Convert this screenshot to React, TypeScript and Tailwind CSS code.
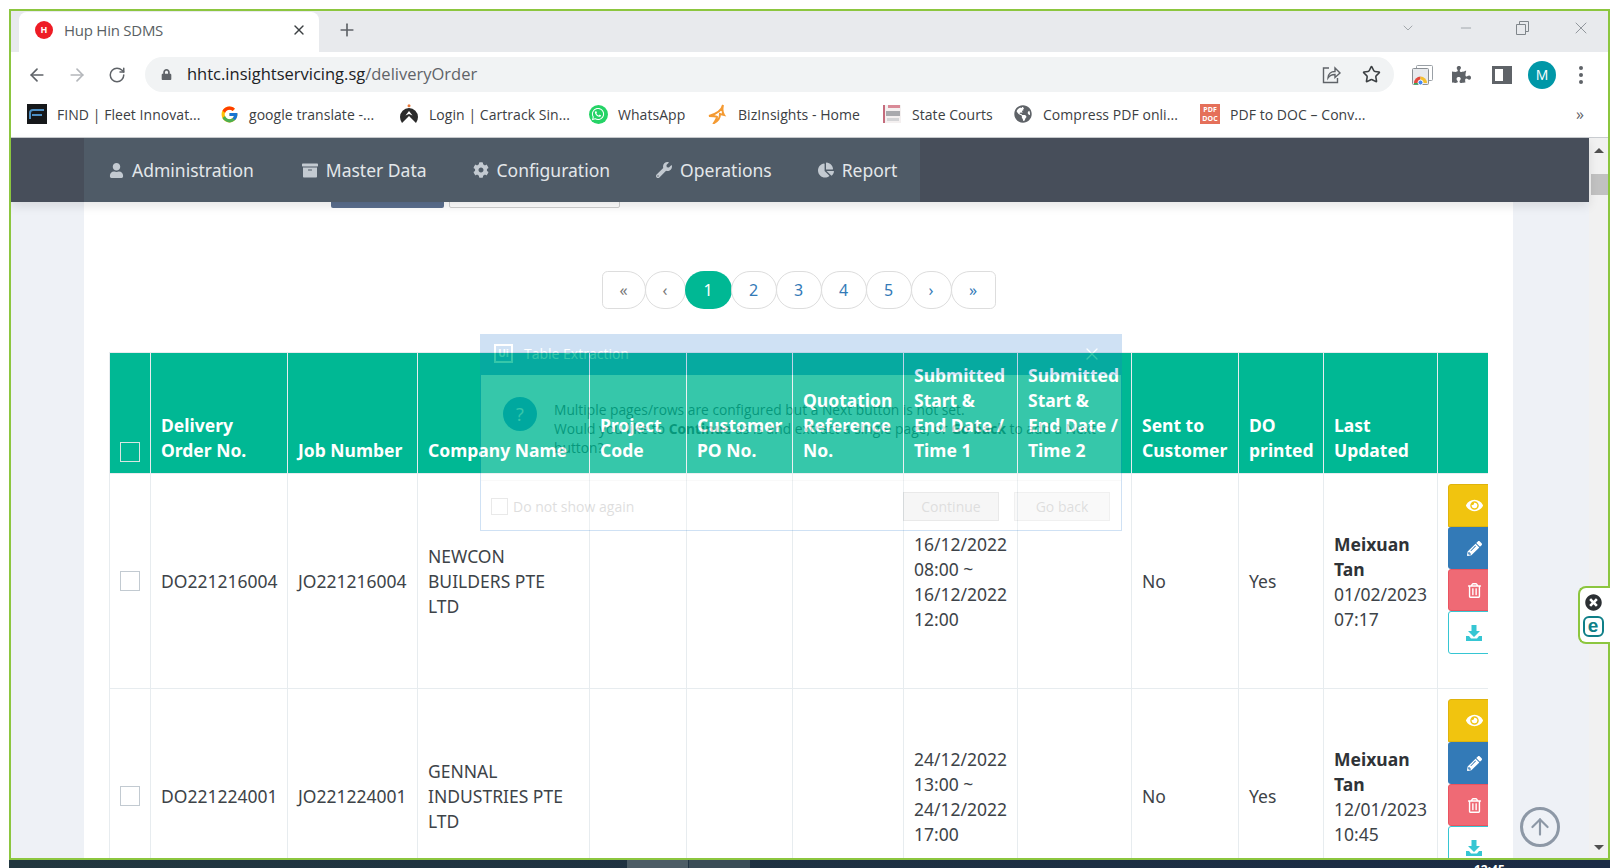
import { ArrowLeft, ArrowRight, RotateCw, X, Plus, ChevronDown, Minus, Star, ArrowUp } from "lucide-react";
import { FaUser, FaArchive, FaCog, FaWrench, FaChartPie, FaEye, FaPencilAlt, FaRegTrashAlt, FaLock, FaWhatsapp, FaGlobeAmericas, FaPuzzlePiece, FaTimesCircle } from "react-icons/fa";
import { FcGoogle } from "react-icons/fc";
import type { ReactNode } from "react";

const PAGE_FONT = "font-['Noto_Sans','Open_Sans',sans-serif]";

function FindIcon() {
  return (
    <svg width="20" height="20" viewBox="0 0 20 20">
      <rect width="20" height="20" fill="#16181a" />
      <path d="M3 15V9q0-3 3-3h11M5 11h10" fill="none" stroke="#4d8fc4" strokeWidth="2" />
    </svg>
  );
}

function CartrackIcon() {
  return (
    <svg width="20" height="20" viewBox="0 0 20 20">
      <circle cx="10" cy="1.800" r="1.500" fill="#e8793a" />
      <path d="M1 13a9 9 0 0 1 18 0q0 3-2 6l-7-7-7 7q-2-3-2-6z" fill="#2a2a2a" />
      <path d="M10 7l3.500 4.500-3.500-1.500-3.500 1.500z" fill="#fff" />
    </svg>
  );
}

function BizIcon() {
  return (
    <svg width="20" height="20" viewBox="0 0 20 20" fill="none" stroke="#f49a32" strokeWidth="2">
      <path d="M15 1C14 6 8 10 1 12c3 0 6 0 8 1 0 2-2 4-3 6 4-2 6-6 6-9l4 1c-2-3-2-6-1-10z" />
    </svg>
  );
}

function CourtsIcon() {
  return (
    <svg width="20" height="20" viewBox="0 0 20 20">
      <rect x="1" y="1" width="18" height="18" fill="#f4f0f0" />
      <rect x="1" y="1" width="2" height="18" fill="#c56b7c" />
      <rect x="6" y="1" width="12" height="3" fill="#d98a97" />
      <rect x="4" y="7" width="14" height="5" fill="#a9a9ad" />
      <rect x="5" y="14" width="12" height="3" fill="#d4d4d6" />
    </svg>
  );
}

function CastIcon() {
  return (
    <svg width="24" height="24" viewBox="0 0 24 24">
      <rect x="6.500" y="2.500" width="16" height="15" rx="1" fill="#fff" stroke="#9aa0a6" />
      <rect x="2.500" y="5.500" width="16" height="16" rx="1" fill="#e8eaed" stroke="#8a8f94" />
      <path d="M4 20a6.500 6.500 0 0 1 6.500-6.500V20z" fill="#e2483d" />
      <path d="M10.500 13.500a6.500 6.500 0 0 1 6.500 6.500h-6.500z" fill="#f5bf2e" />
      <path d="M4 20h6l-1 1.500H4z" fill="#3aa757" />
      <circle cx="10.500" cy="19.500" r="2.500" fill="#4688f1" stroke="#fff" />
    </svg>
  );
}

function ShareIcon() {
  return (
    <svg width="20" height="20" viewBox="0 0 20 20" fill="none" stroke="#5f6368" strokeWidth="1.400">
      <path d="M8 3H2.500v14.500h14V13" />
      <path d="M7 13c0-4 3-6.500 7-6.500V3l5 5-5 4.500V9.500c-3 0-5.500 1-7 3.500z" />
    </svg>
  );
}

function DownloadIcon() {
  return (
    <svg width="16" height="16" viewBox="0 0 16 16" fill="#36c6d3">
      <path d="M5.500 0h5v6H14l-6 6-6-6h3.500z" />
      <path d="M0 11h3l2 2.500h6L13 11h3v5H0z" />
    </svg>
  );
}

const bookmarks: { label: string; icon: ReactNode; width: string }[] = [
  { label: "FIND | Fleet Innovat...", icon: <FindIcon />, width: "w-[192px]" },
  { label: "google translate -...", icon: <FcGoogle size={19} />, width: "w-[180px]" },
  { label: "Login | Cartrack Sin...", icon: <CartrackIcon />, width: "w-[189px]" },
  {
    label: "WhatsApp",
    icon: (
      <span className="flex h-[19px] w-[19px] items-center justify-center rounded-full bg-[#25d366]">
        <FaWhatsapp size={14} color="#fff" />
      </span>
    ),
    width: "w-[120px]",
  },
  { label: "BizInsights - Home", icon: <BizIcon />, width: "w-[174px]" },
  { label: "State Courts", icon: <CourtsIcon />, width: "w-[131px]" },
  { label: "Compress PDF onli...", icon: <FaGlobeAmericas size={18} color="#5f6368" />, width: "w-[187px]" },
  {
    label: "PDF to DOC – Conv...",
    icon: (
      <span className="flex h-[20px] w-[20px] flex-col items-center justify-center bg-[#e5705a] text-[7px] font-bold leading-[9px] text-white">
        <span>PDF</span>
        <span>DOC</span>
      </span>
    ),
    width: "w-[170px]",
  },
];

const navItems = [
  { label: "Administration", icon: <FaUser size={15} /> },
  { label: "Master Data", icon: <FaArchive size={17} /> },
  { label: "Configuration", icon: <FaCog size={16} /> },
  { label: "Operations", icon: <FaWrench size={16} /> },
  { label: "Report", icon: <FaChartPie size={16} /> },
];

const pagesClass = "flex h-[38px] items-center justify-center border border-[#dddddd] bg-white text-[16px] text-[#337ab7]";

const colWidths = ["w-[41px]", "w-[137px]", "w-[130px]", "w-[172px]", "w-[97px]", "w-[106px]", "w-[111px]", "w-[114px]", "w-[114px]", "w-[107px]", "w-[85px]", "w-[114px]", "w-[70px]"];

const headers: ReactNode[] = [
  <>Delivery<br />Order No.</>,
  "Job Number",
  "Company Name",
  <>Project<br />Code</>,
  <>Customer<br />PO No.</>,
  <>Quotation<br />Reference<br />No.</>,
  <>Submitted<br />Start &amp;<br />End Date /<br />Time 1</>,
  <>Submitted<br />Start &amp;<br />End Date /<br />Time 2</>,
  <>Sent to<br />Customer</>,
  <>DO<br />printed</>,
  <>Last<br />Updated</>,
  "",
];

const rows = [
  {
    doNo: "DO221216004",
    job: "JO221216004",
    company: ["NEWCON", "BUILDERS PTE", "LTD"],
    start: ["16/12/2022", "08:00 ~", "16/12/2022", "12:00"],
    updated: ["01/02/2023", "07:17"],
  },
  {
    doNo: "DO221224001",
    job: "JO221224001",
    company: ["GENNAL", "INDUSTRIES PTE", "LTD"],
    start: ["24/12/2022", "13:00 ~", "24/12/2022", "17:00"],
    updated: ["12/01/2023", "10:45"],
  },
];

function Lines({ items }: { items: string[] }) {
  return (
    <>
      {items.map((t, i) => (
        <div key={i}>{t}</div>
      ))}
    </>
  );
}

function Actions() {
  return (
    <div className="flex w-[52px] flex-col">
      <div className="flex h-[43px] items-center justify-center rounded-t-[3px] border border-[#dfb30c] bg-[#f1c40f] text-white"><FaEye size={17} /></div>
      <div className="flex h-[42px] items-center justify-center rounded-[3px] bg-[#337ab7] text-white"><FaPencilAlt size={15} /></div>
      <div className="flex h-[42px] items-center justify-center rounded-[3px] border border-[#ea5460] bg-[#ef6a75] text-white"><FaRegTrashAlt size={15} /></div>
      <div className="flex h-[43px] items-center justify-center rounded-[3px] border border-[#36c6d3] bg-white"><DownloadIcon /></div>
    </div>
  );
}

function Checkbox({ head }: { head?: boolean }) {
  return <div className={`mx-auto h-[20px] w-[20px] border ${head ? "border-[#d8e6e2]" : "border-[#c2cad1] bg-white"}`} />;
}

export default function App() {
  return (
    <div className="relative h-[868px] w-[1618px] overflow-hidden bg-white pl-[9px] pt-[9px]">
      <div className="flex h-[851px] w-[1601px] flex-col overflow-hidden border-2 border-[#8cc63f] font-['Open_Sans',sans-serif]">
        {/* tab strip */}
        <div className="flex h-[41px] shrink-0 items-end bg-[#e8eaed] pl-[8px] text-[#5f6368]">
          <div className="flex h-[40px] w-[300px] items-center rounded-t-lg bg-white pb-[4px] pl-[16px] pr-[12px]">
            <span className="flex h-[18px] w-[18px] items-center justify-center rounded-full bg-[#ee1c25] text-[9px] font-bold text-white">H</span>
            <span className="ml-[11px] flex-1 text-[15px] tracking-[-0.25px] text-[#5a5f64]">Hup Hin SDMS</span>
            <X size={16} strokeWidth={2} className="text-[#3c4043]" />
          </div>
          <div className="flex h-[40px] items-center pb-[4px] pl-[18px]">
            <Plus size={20} strokeWidth={2} />
          </div>
          <div className="ml-auto flex h-[40px] items-center pb-[9px] text-[#80868b]">
            <ChevronDown size={16} strokeWidth={1} />
            <Minus size={16} strokeWidth={1} className="ml-[42px]" />
            <svg width="14" height="14" viewBox="0 0 14 14" fill="none" stroke="#80868b" className="ml-[42px]">
              <path d="M3.500 3.500V.5h9v10h-3M.5 3.500h9v10h-9z" />
            </svg>
            <X size={20} strokeWidth={1} className="ml-[41px] mr-[17px]" />
          </div>
        </div>

        {/* toolbar */}
        <div className="flex h-[43px] shrink-0 items-center bg-white pt-[2px] text-[#5f6368]">
          <ArrowLeft size={20} className="ml-[16px]" />
          <ArrowRight size={20} className="ml-[20px] text-[#b4b7bb]" />
          <RotateCw size={18} className="ml-[21px]" />
          <div className="ml-[19px] flex h-[35px] w-[1249px] items-center rounded-full bg-[#f1f3f4] pl-[16px] pr-[13px]">
            <FaLock size={11} />
            <span className="ml-[15px] text-[16.5px] text-[#202124]">
              hhtc.insightservicing.sg<span className="text-[#5f6368]">/deliveryOrder</span>
            </span>
            <div className="ml-auto flex items-center gap-[21px]">
              <ShareIcon />
              <Star size={19} strokeWidth={2} className="text-[#3c4043]" />
            </div>
          </div>
          <div className="ml-[16px]"><CastIcon /></div>
          <FaPuzzlePiece size={19} className="ml-[18px] text-[#5f6368]" />
          <div className="ml-[21px] flex h-[18px] w-[20px] border-[3px] border-[#5f6368]">
            <div className="w-[8px]" />
            <div className="flex-1 bg-[#5f6368]" />
          </div>
          <div className="ml-[16px] flex h-[28px] w-[28px] items-center justify-center rounded-full bg-[#0097a7] text-[14px] text-white">M</div>
          <div className="ml-[23px] flex flex-col gap-[3px]">
            <span className="h-[4px] w-[4px] rounded-full bg-[#5f6368]" />
            <span className="h-[4px] w-[4px] rounded-full bg-[#5f6368]" />
            <span className="h-[4px] w-[4px] rounded-full bg-[#5f6368]" />
          </div>
        </div>

        {/* bookmarks */}
        <div className="flex h-[43px] shrink-0 items-center border-b border-[#c9ccd0] bg-white pb-[4px] pl-[16px] text-[14px] tracking-[0.05px] text-[#3c4043]">
          {bookmarks.map((b) => (
            <div key={b.label} className={`flex shrink-0 items-center ${b.width}`}>
              <span className="flex w-[20px] justify-center">{b.icon}</span>
              <span className="ml-[10px] whitespace-nowrap">{b.label}</span>
            </div>
          ))}
          <span className="ml-auto mr-[24px] text-[16px] text-[#5f6368]">»</span>
        </div>

        {/* page */}
        <div className={`flex min-h-0 flex-1 ${PAGE_FONT}`}>
          <div className="flex min-w-0 flex-1 flex-col">
            <nav className="relative z-10 flex h-[64px] shrink-0 bg-[#474e5a] pl-[73px] shadow-[0_4px_10px_rgba(0,0,0,0.1)]">
              <div className="flex bg-[#4f5b67] pl-[1px]">
                {navItems.map((n) => (
                  <div key={n.label} className="flex items-center gap-[8px] px-[23px] text-[17.5px] text-[#e3e7ea] first:mr-[2px]">
                    <span className="flex w-[16px] justify-center text-[#c3cad1]">{n.icon}</span>
                    {n.label}
                  </div>
                ))}
              </div>
            </nav>
            <div className="flex min-h-0 flex-1 bg-[#eef1f6]">
              <div className="mx-[73px] min-w-0 w-[1429px] flex-none bg-white px-[25px]">
                <div className="-mt-px flex h-[7px] gap-[5px] overflow-hidden pl-[222px]">
                  <div className="h-[7px] w-[113px] rounded-b-[2px] bg-[#5b6f8e]" />
                  <div className="h-[7px] w-[171px] rounded-b-[2px] border border-[#cfcfcf] bg-white" />
                </div>
                <div className="flex justify-center pt-[63px]">
                  <div className={`${pagesClass} w-[44px] rounded-l-[6px] rounded-r-[20px] text-[#777]`}>«</div>
                  <div className={`${pagesClass} -ml-px w-[41px] rounded-full text-[#777]`}>‹</div>
                  <div className="-ml-px flex h-[38px] w-[47px] items-center justify-center rounded-full bg-[#00b894] text-[16px] text-white">1</div>
                  {["2", "3", "4", "5"].map((p) => (
                    <div key={p} className={`${pagesClass} -ml-px w-[46px] rounded-full`}>{p}</div>
                  ))}
                  <div className={`${pagesClass} -ml-px w-[41px] rounded-full`}>›</div>
                  <div className={`${pagesClass} -ml-px w-[45px] rounded-l-[20px] rounded-r-[6px]`}>»</div>
                </div>
                <div className="mt-[43px] w-[1379px] overflow-hidden">
                  <table className="w-[1398px] table-fixed border-collapse text-[17.5px] leading-[25px] text-[#3d4348]">
                    <colgroup>
                      {colWidths.map((w, i) => (
                        <col key={i} className={w} />
                      ))}
                    </colgroup>
                    <thead>
                      <tr className="h-[121px] bg-[#00b894] text-white">
                        <th className="border border-[#e7ecef] px-[10px] pb-[11px] align-bottom"><Checkbox head /></th>
                        {headers.map((h, i) => (
                          <th key={i} className="whitespace-nowrap border border-[#e7ecef] px-[10px] pb-[10px] text-left align-bottom font-bold">{h}</th>
                        ))}
                      </tr>
                    </thead>
                    <tbody>
                      {rows.map((r) => (
                        <tr key={r.doNo} className="h-[215px]">
                          <td className="border border-[#e7ecef] px-[10px]"><Checkbox /></td>
                          <td className="whitespace-nowrap border border-[#e7ecef] px-[10px]">{r.doNo}</td>
                          <td className="whitespace-nowrap border border-[#e7ecef] px-[10px]">{r.job}</td>
                          <td className="whitespace-nowrap border border-[#e7ecef] px-[10px]"><Lines items={r.company} /></td>
                          <td className="border border-[#e7ecef]" />
                          <td className="border border-[#e7ecef]" />
                          <td className="border border-[#e7ecef]" />
                          <td className="whitespace-nowrap border border-[#e7ecef] px-[10px] pt-[2px]"><Lines items={r.start} /></td>
                          <td className="border border-[#e7ecef]" />
                          <td className="border border-[#e7ecef] px-[10px]">No</td>
                          <td className="border border-[#e7ecef] px-[10px]">Yes</td>
                          <td className="whitespace-nowrap border border-[#e7ecef] px-[10px] pt-[2px]">
                            <div className="font-bold text-[#2f3337]">Meixuan</div>
                            <div className="font-bold text-[#2f3337]">Tan</div>
                            <Lines items={r.updated} />
                          </td>
                          <td className="border border-[#e7ecef] px-[10px] pb-[34px] pt-[10px] align-top"><Actions /></td>
                        </tr>
                      ))}
                    </tbody>
                  </table>
                </div>
              </div>
            </div>
          </div>
          {/* scrollbar */}
          <div className="flex w-[19px] shrink-0 flex-col items-center bg-[#f1f1f1]">
            <div className="mt-[10px] h-0 w-0 border-x-[5px] border-b-[5px] border-x-transparent border-b-[#505050]" />
            <div className="ml-[2px] mt-[21px] h-[21px] w-[17px] bg-[#c1c1c1]" />
            <div className="mt-auto mb-[8px] h-0 w-0 border-x-[5px] border-t-[5px] border-x-transparent border-t-[#505050]" />
          </div>
        </div>
      </div>

      {/* taskbar edge */}
      <div className="flex h-[8px] w-[1601px] overflow-hidden bg-gradient-to-r from-[#22373f] to-[#1b2b45]">
        <div className="ml-[618px] h-full w-[61px] bg-[#4d5d66]" />
        <div className="ml-px h-full w-[61px] bg-[#3b4d57]" />
        <div className="ml-[724px] pt-[4px] text-[12px] font-bold leading-[12px] text-white">12:45</div>
      </div>

      {/* faded dialog caught mid-transition */}
      <div className="pointer-events-none absolute left-[480px] top-[334px] z-20 flex h-[197px] w-[642px] flex-col border border-[#2078d0] bg-white font-['Open_Sans',sans-serif] opacity-[0.21]">
        <div className="flex h-[40px] shrink-0 items-center bg-[#2078d0] pb-[3px] pl-[13px] pr-[19px] text-white">
          <span className="flex h-[19px] w-[19px] items-center justify-center border-2 border-white text-[10px] font-bold">Ui</span>
          <span className="ml-[11px] text-[14px]">Table Extraction</span>
          <X size={20} strokeWidth={1.5} className="ml-auto" />
        </div>
        <div className="flex flex-1 pl-[22px] pt-[22px]">
          <span className="flex h-[34px] w-[34px] shrink-0 items-center justify-center rounded-full bg-[#0072c8] text-[18px] text-white">?</span>
          <p className="ml-[17px] mt-[3px] text-[13.8px] leading-[19px] text-[#222]">
            Multiple pages/rows are configured but a Next button is not set.<br />
            Would you like to <b>Continue</b> as is and extract a single page, or <b>Go back</b> to add a Next<br />
            button?
          </p>
        </div>
        <div className="flex h-[50px] items-center border-t border-[#e4e4e4] pl-[10px] pr-[11px] pt-[1px] text-[14px] text-[#666]">
          <span className="h-[17px] w-[17px] border border-[#999]" />
          <span className="ml-[5px]">Do not show again</span>
          <span className="ml-auto flex h-[29px] w-[96px] items-center justify-center border border-[#999] bg-[#d6d6d6]">Continue</span>
          <span className="ml-[15px] flex h-[29px] w-[96px] items-center justify-center border border-[#bbb] bg-[#e6e6e6]">Go back</span>
        </div>
      </div>

      {/* ESET side tab */}
      <div className="absolute left-[1578px] top-[586px] z-20 flex h-[58px] w-[32px] flex-col items-center gap-[5px] rounded-l-[8px] border-2 border-r-0 border-[#8cc63f] bg-white pr-[4px] pt-[6px]">
        <FaTimesCircle size={17} color="#2b2f33" />
        <span className="flex h-[21px] w-[21px] shrink-0 items-center justify-center rounded-[6px] border-2 border-[#0f7f88] pb-[2px] font-['Liberation_Sans',sans-serif] text-[19px] font-bold leading-none text-[#0f7f88]">e</span>
      </div>

      {/* back to top */}
      <div className="absolute left-[1520px] top-[807px] z-20 flex h-[40px] w-[40px] items-center justify-center rounded-full border-[3px] border-[#8d98a6] text-[#8d98a6]">
        <ArrowUp size={26} strokeWidth={2} />
      </div>
    </div>
  );
}
